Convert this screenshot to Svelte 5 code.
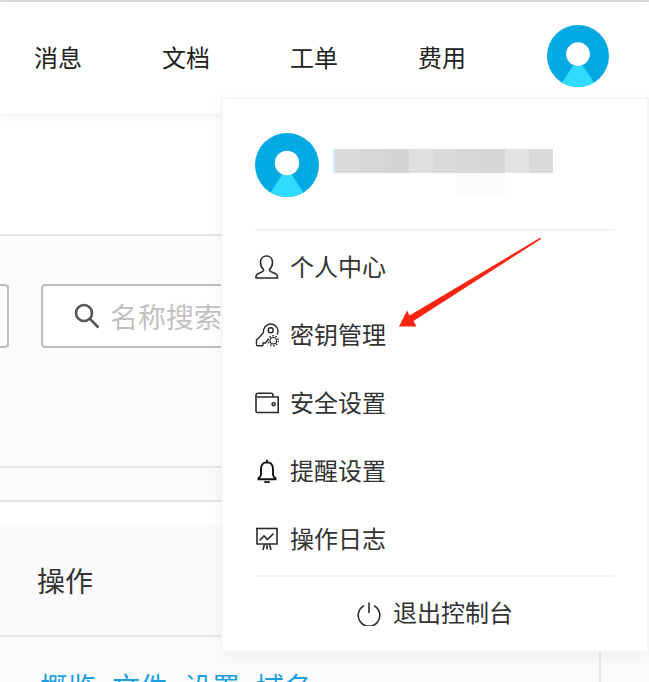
<script>
  const blocks = ['#d9d9d9','#d7d7d7','#d4d4d2','#dde0df','#d9d9d8','#d8d8d7','#d6d6d5','#e3e3e2','#dbdad8'];
  const nav = ['消息','文档','工单','费用'];
  const links = ['概览','文件','设置','域名'];
</script>

{#snippet avatar()}
  <svg class="avatar-svg" viewBox="0 0 64 64" aria-hidden="true">
    <circle cx="32" cy="32" r="32" fill="#02a9e3" />
    <path d="M15.5 59.4A32 32 0 0 0 48.5 59.4L37 42H27Z" fill="#2fdcff" />
    <circle cx="32" cy="30" r="12.2" fill="#fff" />
  </svg>
{/snippet}

<div class="page">
  <div class="strip"></div>
  <header class="header">
    <nav class="nav">
      {#each nav as item}<span>{item}</span>{/each}
    </nav>
    <div class="avatar-top">{@render avatar()}</div>
  </header>
  <div class="blank"></div>
  <section class="filters">
    <div class="input stub"></div>
    <div class="input search">
      <svg class="search-icon" viewBox="0 0 26 26" aria-hidden="true">
        <circle cx="10" cy="10" r="8" />
        <path d="M16 16l8.500 8.500" />
      </svg>
      <span>名称搜索</span>
    </div>
  </section>
  <div class="band"></div>
  <div class="gap"></div>
  <div class="thead">操作</div>
  <div class="tbody">
    <div class="links">
      {#each links as link}<span>{link}</span>{/each}
    </div>
    <div class="vline"></div>
  </div>

  <aside class="menu">
    <div class="profile">
      <div class="avatar-menu">{@render avatar()}</div>
      <div class="name">
        <div class="blur">
          {#each blocks as c}<i style="background:{c}"></i>{/each}
        </div>
        <div class="blur-sub"></div>
      </div>
    </div>
    <ul class="items">
      <li>
        <svg viewBox="0 0 24 24"><path d="M8.500 14.500C6.500 12.500 5.500 10 5.500 7.500 5.500 3.500 8 1 11.500 1 15 1 17.500 3.500 17.500 7.500 17.500 10 16.500 12.500 14.500 14.500V15.500C14.500 16.500 19 18 21 19 22 19.500 22.500 20.500 22.500 22V23H1V22C1 20.500 1.500 19.500 2.500 19 4.500 18 8.500 16.500 8.500 15.500Z" /></svg>
        <span>个人中心</span>
      </li>
      <li>
        <svg class="key" viewBox="0 0 24 24"><path d="M8.300 10C8 4.500 11.500 1 15.500 1 20 1 23 4.500 23 8 23 9.500 22.700 10.500 22 11.500" /><path d="M8.300 10L1.500 17V21.500C1.500 22.200 2 22.700 2.700 22.700H7C7.600 22.700 8 22.200 8 21.500V20H10.500L13.500 16" /><circle cx="15.700" cy="7.300" r="2.500" /><circle cx="18.300" cy="17.700" r="3.200" stroke-width="1.100" /><circle cx="18.300" cy="17.700" r="5" stroke-width="1.400" stroke-dasharray="1.500 1.640" /></svg>
        <span>密钥管理</span>
      </li>
      <li>
        <svg viewBox="0 0 24 24"><path d="M1 6V4.200C1 3 1.800 2.200 3 2.200H16C17.200 2.200 18 3 18 4.200V6" /><path d="M1 5V20.200C1 21 1.500 21.500 2.300 21.500H23.200V6H2" /><circle cx="18.600" cy="13.300" r="1.500" /></svg>
        <span>安全设置</span>
      </li>
      <li>
        <svg class="bell" viewBox="0 0 24 24"><path d="M12 3.200C8.200 3.200 6 6.200 6 10V15.500C6 17 4.500 18.500 3.500 19.300V20.300H20.500V19.300C19.500 18.500 18 17 18 15.500V10C18 6.200 15.800 3.200 12 3.200Z" /><path d="M12 3.200V0.800" /><path d="M9.500 22.300C10.500 23.500 13.500 23.500 14.500 22.300" /></svg>
        <span>提醒设置</span>
      </li>
      <li>
        <svg viewBox="0 0 24 24"><path d="M1 1.500H23" /><path d="M2 1.500V17H22V1.500" /><path d="M4.500 13.500L9 9 12.500 12.500 18.500 6.500" /><path d="M12 17V22.500M8 23L9.500 17M16 23L14.500 17" /></svg>
        <span>操作日志</span>
      </li>
    </ul>
    <div class="logout">
      <svg viewBox="0 0 24 24"><path d="M7 3.800A10.800 10.800 0 1 0 17 3.800" /><path d="M12 0.500V11" /></svg>
      <span>退出控制台</span>
    </div>
  </aside>

  <svg class="arrow" viewBox="0 0 649 682" aria-hidden="true">
    <path d="M540.500 237.500L409.500 315.500 407 310.500 399 326.500 416.500 326.500 413.500 321 541 239Z" fill="#fb2412" />
  </svg>
</div>

<style>
  :global(body) {
    margin: 0;
    background: #fff;
  }
  .page {
    position: relative;
    width: 649px;
    height: 682px;
    overflow: hidden;
    display: flex;
    flex-direction: column;
    background: #fcfcfe;
    font-family: "Noto Sans CJK SC", "Noto Sans", sans-serif;
    color: #2f2f2f;
  }
  .strip {
    height: 2px;
    background: #dcdce0;
    flex: none;
  }
  .header {
    position: relative;
    z-index: 1;
    height: 112px;
    flex: none;
    background: #fff;
    box-shadow: 0 2px 8px rgba(0, 0, 0, 0.07);
    display: flex;
    align-items: flex-start;
    padding-left: 34px;
    box-sizing: border-box;
  }
  .nav {
    display: flex;
    gap: 80px;
    margin-top: 37px;
    font-size: 24px;
    line-height: 36px;
    color: #222;
  }
  .avatar-top {
    width: 62px;
    height: 62px;
    margin: 23px 0 0 81px;
  }
  .avatar-svg {
    display: block;
    width: 100%;
    height: 100%;
  }
  .blank {
    height: 120px;
    flex: none;
    background: #fff;
    border-bottom: 2px solid #e8e8ea;
  }
  .filters {
    flex: none;
    height: 232px;
    box-sizing: border-box;
    padding-top: 48px;
    display: flex;
    align-items: flex-start;
    gap: 32px;
    border-bottom: 2px solid #e8e8ea;
  }
  .input {
    height: 64px;
    box-sizing: border-box;
    border: 2px solid #bdbdbd;
    border-radius: 4px;
    background: #fff;
  }
  .stub {
    width: 9px;
    border-left: 0;
    border-radius: 0 4px 4px 0;
  }
  .search {
    width: 300px;
    display: flex;
    align-items: center;
    padding-left: 31px;
    gap: 10px;
    font-size: 28px;
    color: #c2c2c2;
  }
  .search span {
    white-space: nowrap;
  }
  .search-icon {
    width: 26px;
    height: 26px;
    flex: none;
    fill: none;
    stroke: #555;
    stroke-width: 2.6;
  }
  .band {
    height: 32px;
    flex: none;
    background: #fbfbfd;
    border-bottom: 2px solid #e8e8ea;
  }
  .gap {
    height: 23px;
    flex: none;
    background: #fff;
  }
  .thead {
    height: 112px;
    flex: none;
    box-sizing: border-box;
    padding-left: 37px;
    display: flex;
    align-items: center;
    background: #fafafa;
    border-bottom: 2px solid #e8e8e8;
    font-size: 28px;
    color: #333;
  }
  .tbody {
    position: relative;
    flex: 1;
  }
  .links {
    display: flex;
    gap: 16px;
    padding: 29px 0 0 40px;
    font-size: 28px;
    line-height: 40px;
    color: #1c9fe0;
  }
  .vline {
    position: absolute;
    left: 599px;
    top: 0;
    bottom: 0;
    width: 2px;
    background: #e8e8e8;
  }
  .menu {
    position: absolute;
    z-index: 2;
    left: 221px;
    top: 97px;
    width: 428px;
    height: 555px;
    box-sizing: border-box;
    padding: 34px 32px 0;
    background: #fff;
    border: 2px solid #f6f6f8;
    box-shadow: 0 6px 18px rgba(0, 0, 0, 0.05);
    display: flex;
    flex-direction: column;
  }
  .profile {
    height: 98px;
    box-sizing: border-box;
    display: flex;
    flex: none;
    border-bottom: 2px solid #f3f3f3;
  }
  .avatar-menu {
    width: 64px;
    height: 64px;
    flex: none;
  }
  .name {
    margin: 16px 0 0 14px;
  }
  .blur {
    display: flex;
    height: 24px;
    border-left: 2px solid #d3eff8;
  }
  .blur i {
    width: 24px;
    display: block;
  }
  .blur i:first-child {
    width: 26px;
  }
  .blur-sub {
    width: 48px;
    height: 22px;
    margin: 2px 0 0 124px;
    background: #fcfcfc;
  }
  .items {
    list-style: none;
    margin: 0;
    padding: 2px 0;
    height: 346px;
    box-sizing: border-box;
    border-bottom: 2px solid #f3f3f3;
    flex: none;
  }
  .items li {
    height: 68px;
    display: flex;
    align-items: center;
    gap: 11px;
    font-size: 24px;
    color: #333;
  }
  .items span,
  .logout span {
    padding-bottom: 4px;
  }
  .items svg,
  .logout svg {
    width: 24px;
    height: 24px;
    flex: none;
    fill: none;
    stroke: #2b2b2b;
    stroke-width: 1.6;
  }
  .items .key {
    stroke-width: 1.4;
  }
  .items .bell {
    stroke: #111;
    stroke-width: 1.9;
  }
  .logout {
    flex: 1;
    display: flex;
    align-items: center;
    justify-content: center;
    gap: 12px;
    font-size: 24px;
    color: #333;
  }
  .arrow {
    position: absolute;
    z-index: 3;
    left: 0;
    top: 0;
    width: 649px;
    height: 682px;
    pointer-events: none;
  }
</style>
